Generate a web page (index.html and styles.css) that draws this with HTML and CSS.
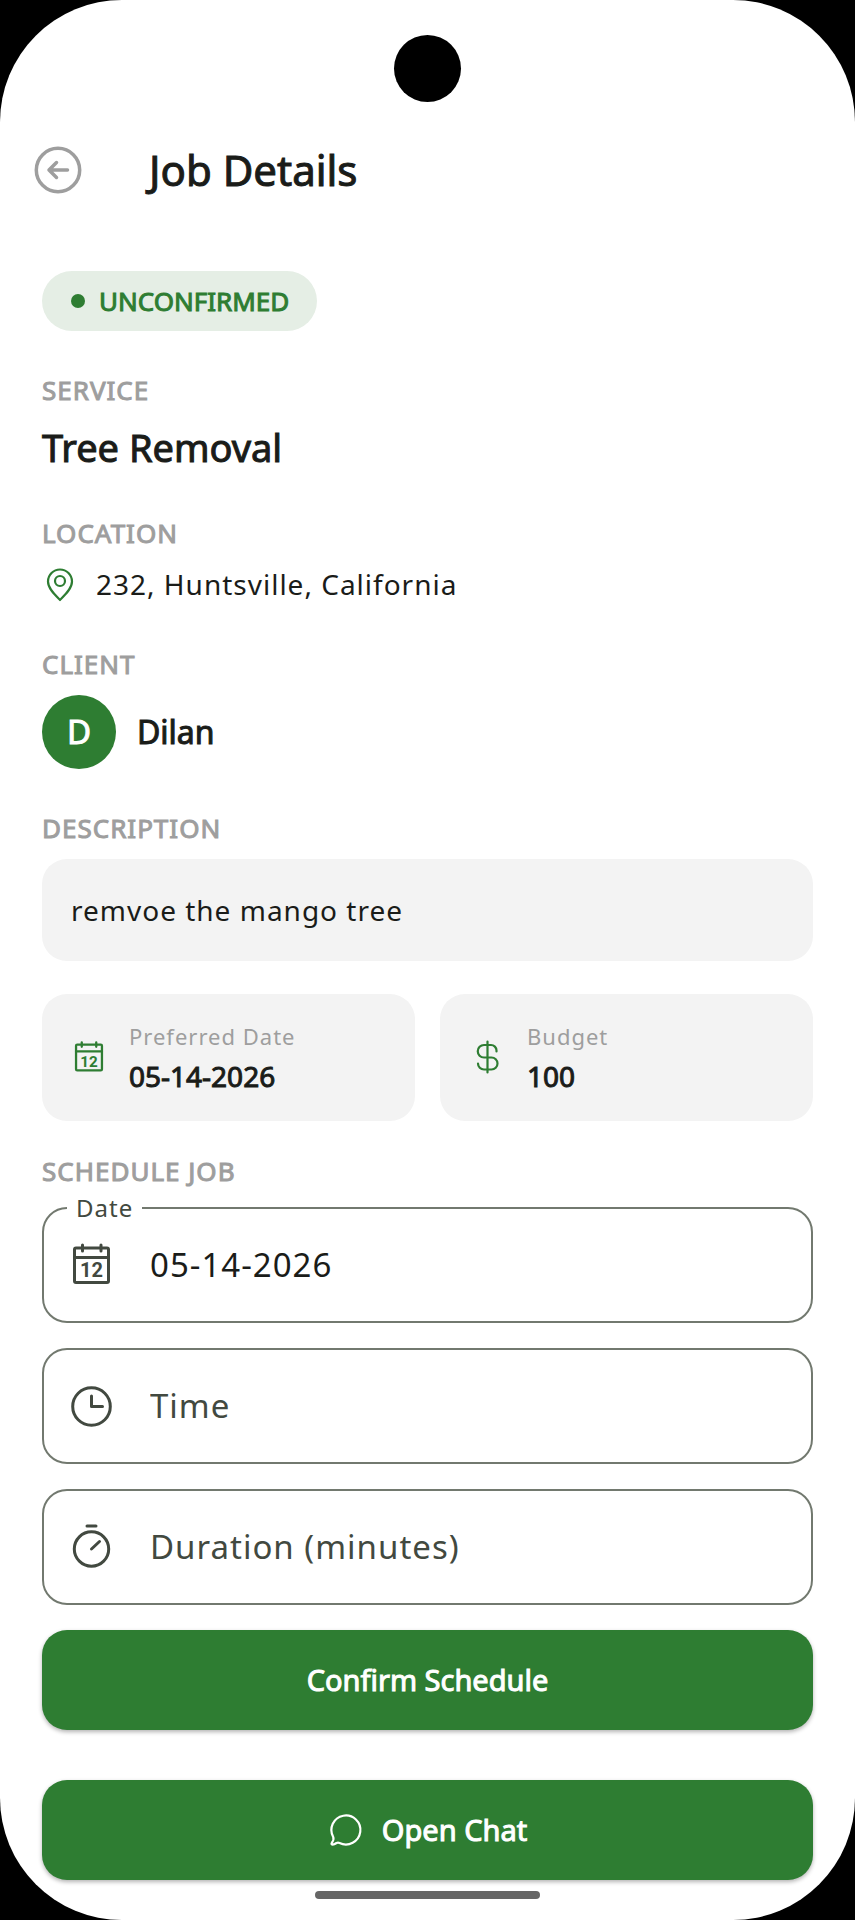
FILE: index.html
```html
<!DOCTYPE html>
<html lang="en">
<head>
	<meta charset="UTF-8">
	<meta name="viewport" content="width=device-width, initial-scale=1">
	<title>Job Details</title>
	<link rel="stylesheet" href="styles.css">
</head>
<body>
<div class="screen">
	<span class="camera"></span>
	<header class="top-bar">
		<button class="back-btn" type="button" aria-label="Back">
			<svg width="48" height="48" viewBox="0 0 48 48" fill="none" stroke="currentColor" stroke-width="3.5" stroke-linecap="round" stroke-linejoin="round">
				<circle cx="24" cy="24" r="21.7"/>
				<path d="M33.500 24H15M22.500 16.500L15 24l7.500 7.500"/>
			</svg>
		</button>
		<h1>Job Details</h1>
	</header>

	<main class="content">
		<div class="status"><span class="dot"></span>UNCONFIRMED</div>

		<section>
			<h2 class="label">SERVICE</h2>
			<p class="service">Tree Removal</p>
		</section>

		<section>
			<h2 class="label">LOCATION</h2>
			<p class="location">
				<svg width="36" height="36" viewBox="0 0 36 36" fill="none" stroke="currentColor" stroke-width="2.2" stroke-linejoin="round">
					<path d="M18 33C13 28 6 21.500 6 14.500a12 12 0 0 1 24 0C30 21.500 23 28 18 33z"/>
					<circle cx="18" cy="14" r="5"/>
				</svg>
				<span>232, Huntsville, California</span>
			</p>
		</section>

		<section>
			<h2 class="label">CLIENT</h2>
			<div class="client">
				<span class="avatar">D</span>
				<span class="client-name">Dilan</span>
			</div>
		</section>

		<section>
			<h2 class="label">DESCRIPTION</h2>
			<p class="description">remvoe the mango tree</p>
		</section>

		<div class="cards">
			<div class="card">
				<svg class="small-icon" width="32" height="32" viewBox="0 0 42 42" fill="none" stroke="currentColor" stroke-width="3" stroke-linecap="round" stroke-linejoin="round">
					<rect x="4" y="6" width="34" height="34" rx="1.500"/>
					<path d="M4 15h34M11.500 3v6M30.500 3v6"/>
					<text class="icon-day" x="21" y="35">12</text>
				</svg>
				<div>
					<p class="card-label">Preferred Date</p>
					<p class="card-value">05-14-2026</p>
				</div>
			</div>
			<div class="card">
				<svg width="36" height="36" viewBox="0 0 36 36" fill="none" stroke="currentColor" stroke-width="2.2" stroke-linecap="round">
					<path d="M18.500 3.500v31M27.500 13.500v-1a5.500 5.500 0 0 0-5.500-5.500h-7a6 6 0 0 0 0 12.500h7.500a6 6 0 0 1 0 12h-7.500a6 6 0 0 1-6-6"/>
				</svg>
				<div>
					<p class="card-label">Budget</p>
					<p class="card-value">100</p>
				</div>
			</div>
		</div>

		<form class="schedule">
			<h2 class="label">SCHEDULE JOB</h2>
			<div class="field">
				<label for="date">Date</label>
				<svg width="42" height="42" viewBox="0 0 42 42" fill="none" stroke="currentColor" stroke-width="3" stroke-linecap="round" stroke-linejoin="round">
					<rect x="4.500" y="4" width="34" height="34.500" rx="1.500"/>
					<path d="M4.500 13.500h34M12.500 1v6M31 1v6"/>
					<text class="icon-day" x="21.500" y="33">12</text>
				</svg>
				<input id="date" type="text" value="05-14-2026">
			</div>
			<div class="field">
				<svg width="42" height="42" viewBox="0 0 42 42" fill="none" stroke="currentColor" stroke-width="3" stroke-linecap="round" stroke-linejoin="round">
					<circle cx="21.500" cy="21.500" r="18.800"/>
					<path d="M21.500 11v10.500H32.500"/>
				</svg>
				<input type="text" placeholder="Time" aria-label="Time">
			</div>
			<div class="field">
				<svg width="42" height="42" viewBox="0 0 42 42" fill="none" stroke="currentColor" stroke-width="3" stroke-linecap="round">
					<circle cx="21.500" cy="23" r="17.200"/>
					<path d="M17 0h9M21.500 23l8-7.500"/>
				</svg>
				<input type="text" placeholder="Duration (minutes)" aria-label="Duration (minutes)">
			</div>
			<button class="btn" type="submit">Confirm Schedule</button>
		</form>

		<button class="btn" type="button">
			<svg width="36" height="36" viewBox="0 0 36 36" fill="none" stroke="currentColor" stroke-width="2.2" stroke-linecap="round" stroke-linejoin="round">
				<path d="M5.200 25A14.500 14.500 0 1 1 11.500 31Q10 30.300 8.500 31Q6 32.800 4 32.500Q3 32 4 30.500Q6.200 27.500 5.200 25z"/>
			</svg>
			Open Chat
		</button>
	</main>
	<span class="home-bar"></span>
</div>
</body>
</html>
```
FILE: styles.css
```css
*{
	box-sizing: border-box;
	margin: 0;
	padding: 0;
}
body{
	background-color: #000;
	color: #1a1c19;
	font-family: "Noto Sans", sans-serif;
	font-size: 28px;
	line-height: 40px;
}
svg{
	display: block;
	flex: none;
	overflow: visible;
}
button, input{
	font: inherit;
	color: inherit;
	border: none;
	background: none;
}
.screen{
	position: relative;
	min-height: 100vh;
	background-color: #fff;
	border-radius: 122px;
}
/* camera hole and gesture bar */
.camera{
	position: absolute;
	top: 35px;
	left: 50%;
	width: 67px;
	height: 67px;
	margin-left: -34px;
	border-radius: 50%;
	background-color: #000;
}
.home-bar{
	position: absolute;
	bottom: 21px;
	left: 50%;
	width: 225px;
	height: 8px;
	margin-left: -113px;
	border-radius: 4px;
	background-color: #666;
}

.top-bar{
	display: flex;
	align-items: center;
	gap: 67px;
	padding: 141px 34px 0;
}
.back-btn{
	color: #9e9e9e;
}
h1{
	font-size: 42px;
	line-height: 58px;
	font-weight: 400;
	-webkit-text-stroke: 1px;
}

.content{
	display: flex;
	flex-direction: column;
	padding: 72px 42px 40px;
}
.content section{
	margin-top: 42px;
}
.status{
	display: flex;
	align-items: center;
	align-self: flex-start;
	gap: 14px;
	padding: 12px 28px 12px 29px;
	border-radius: 30px;
	background-color: #e5eee5;
	color: #2e7d32;
	font-size: 26px;
	line-height: 36px;
	-webkit-text-stroke: 1px;
}
.dot{
	width: 14px;
	height: 14px;
	border-radius: 50%;
	background-color: #2e7d32;
}
.label{
	margin-bottom: 14px;
	color: #9e9e9e;
	font-size: 26px;
	line-height: 34px;
	font-weight: 400;
	letter-spacing: 1px;
	-webkit-text-stroke: 1px;
}
.service{
	font-size: 38px;
	line-height: 53px;
	-webkit-text-stroke: 1px;
}
.location{
	display: flex;
	align-items: center;
	gap: 18px;
	line-height: 41px;
	letter-spacing: 1px;
}
.location svg{
	color: #2e7d32;
}
.client{
	display: flex;
	align-items: center;
	gap: 21px;
}
.avatar{
	width: 74px;
	height: 74px;
	border-radius: 50%;
	background-color: #2e7d32;
	color: #fff;
	font-size: 33px;
	line-height: 74px;
	text-align: center;
	-webkit-text-stroke: 1px;
}
.client-name{
	font-size: 32px;
	-webkit-text-stroke: 1px;
}
.description{
	padding: 31px 29px;
	border-radius: 25px;
	background-color: #f3f3f3;
	letter-spacing: 1px;
}

.cards{
	display: grid;
	grid-template-columns: 1fr 1fr;
	gap: 25px;
	margin: 33px 0;
}
.card{
	display: flex;
	align-items: center;
	gap: 22px;
	padding: 22px 29px 25px;
	border-radius: 25px;
	background-color: #f3f3f3;
}
.card svg{
	color: #2e7d32;
}
.card .small-icon{
	margin: 0 2px;
}
.card-label{
	color: #9e9e9e;
	font-size: 22px;
	letter-spacing: 1px;
}
.card-value{
	-webkit-text-stroke: 1px;
}
.icon-day{
	fill: currentColor;
	stroke: none;
	font-family: Roboto, sans-serif;
	font-size: 20px;
	font-weight: 700;
	text-anchor: middle;
}

.schedule{
	display: flex;
	flex-direction: column;
	gap: 25px;
	margin-bottom: 50px;
}
.schedule .label{
	margin-bottom: -6px;
}
.field{
	position: relative;
	display: flex;
	align-items: center;
	gap: 38px;
	height: 116px;
	padding: 0 26px;
	border: 2px solid #72796f;
	border-radius: 25px;
	color: #424940;
}
/* floating label sits on the border */
.field label{
	position: absolute;
	top: -20px;
	left: 23px;
	padding: 0 9px;
	background-color: #fff;
	font-size: 24px;
	line-height: 38px;
	letter-spacing: 1px;
}
.field input{
	flex: 1;
	min-width: 0;
	color: #1a1c19;
	font-size: 33px;
	line-height: 46px;
	letter-spacing: 1px;
	outline: none;
}
.field input::placeholder{
	color: #424940;
	opacity: 1;
}
.btn{
	display: flex;
	align-items: center;
	justify-content: center;
	gap: 18px;
	height: 100px;
	border-radius: 25px;
	background-color: #2e7d32;
	color: #fff;
	font-size: 29px;
	box-shadow: 0 2px 4px rgba(0, 0, 0, 0.3);
	-webkit-text-stroke: 1px;
	cursor: pointer;
}
```
